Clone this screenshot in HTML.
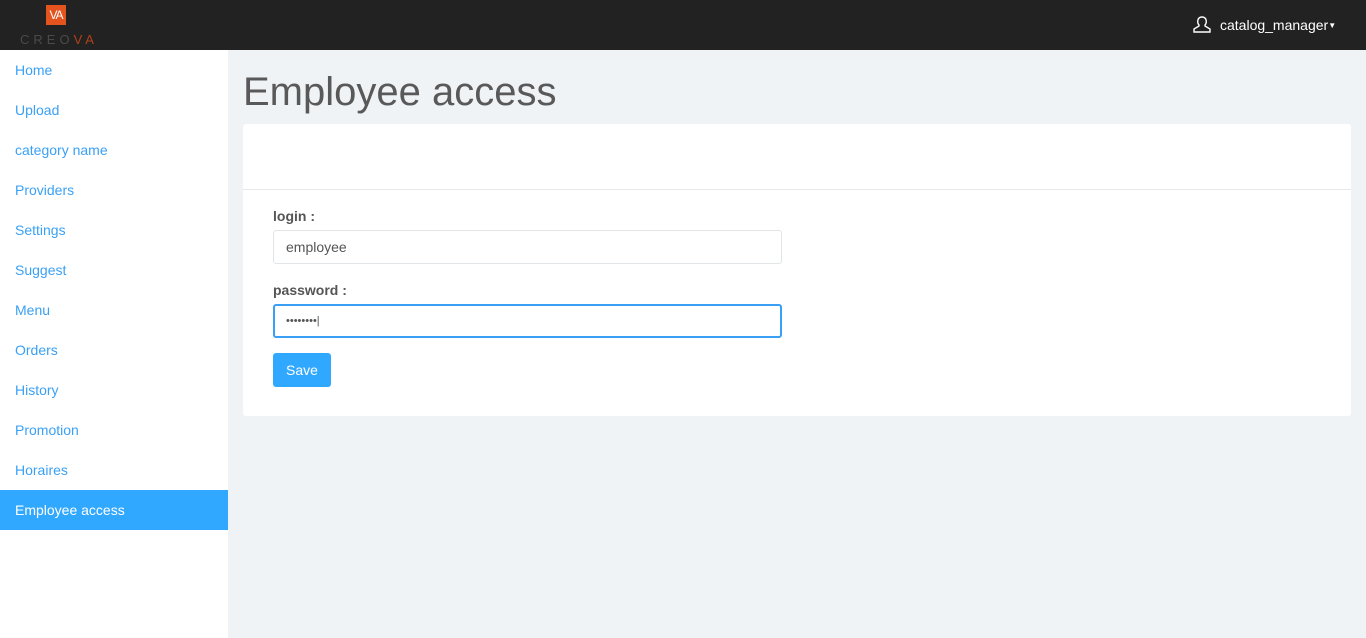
<!DOCTYPE html>
<html><head><style>
*{box-sizing:border-box;margin:0;padding:0}
body{width:1366px;height:638px;background:#eff3f6;font-family:"Liberation Sans",sans-serif;font-size:14px;position:relative;overflow:hidden}
.top{position:absolute;left:0;top:0;width:1366px;height:50px;background:#222}
.logo{position:absolute;left:46px;top:5px;width:20px;height:20px;background:#e5541f;color:#fff;font-size:12px;text-align:center;line-height:20px;letter-spacing:-1px}
.logot{position:absolute;left:20px;top:32px;color:#4a4a4a;font-size:13px;letter-spacing:4px}
.logot span{color:#b0401a}
.user{position:absolute;left:1193px;top:15px;color:#fff;font-size:14px}
.side{position:absolute;left:0;top:50px;width:228px;height:588px;background:#fff}
.side a{display:block;height:40px;line-height:40px;padding-left:15px;color:#3aa0f5;text-decoration:none}
.side a.act{background:#31a8ff;color:#fff}
h1{position:absolute;left:243px;top:70px;font-size:40px;font-weight:normal;color:#595959}
.panel{position:absolute;left:243px;top:124px;width:1108px;height:292px;background:#fff;border-radius:3px}
.hr{position:absolute;left:0;top:65px;width:100%;border-top:1px solid #e6e9ec}
label{position:absolute;left:30px;font-weight:bold;color:#555}
.in{position:absolute;left:30px;width:509px;height:34px;border:1px solid #e2e5e8;border-radius:3px;padding-left:12px;line-height:32px;color:#555}
.btn{position:absolute;left:30px;top:229px;width:58px;height:34px;background:#31a8ff;color:#fff;border-radius:3px;text-align:center;line-height:34px}
</style></head><body>
<div class="top"><div class="logo">VA</div><div class="logot">CREO<span>VA</span></div>
<div class="user"><svg width="18" height="18" viewBox="0 0 18 18" style="vertical-align:-3px;margin-right:9px"><path d="M6 10 C4 8 4 2 9 2 C14 2 14 8 12 10 L12 11 L17 14 L17 17 L1 17 L1 14 L6 11 Z" fill="none" stroke="#fff" stroke-width="1.4"/></svg>catalog_manager<span style="font-size:8px;vertical-align:2px">▼</span></div></div>
<div class="side"><a>Home</a><a>Upload</a><a>category name</a><a>Providers</a><a>Settings</a><a>Suggest</a><a>Menu</a><a>Orders</a><a>History</a><a>Promotion</a><a>Horaires</a><a class="act">Employee access</a></div>
<h1>Employee access</h1>
<div class="panel"><div class="hr"></div>
<label style="top:84px">login :</label>
<div class="in" style="top:106px">employee</div>
<label style="top:158px">password :</label>
<div class="in" style="top:180px;border:2px solid #3aa0f5;line-height:30px;padding-left:11px;font-size:11px">••••••••|</div>
<div class="btn">Save</div>
</div>
</body></html>
